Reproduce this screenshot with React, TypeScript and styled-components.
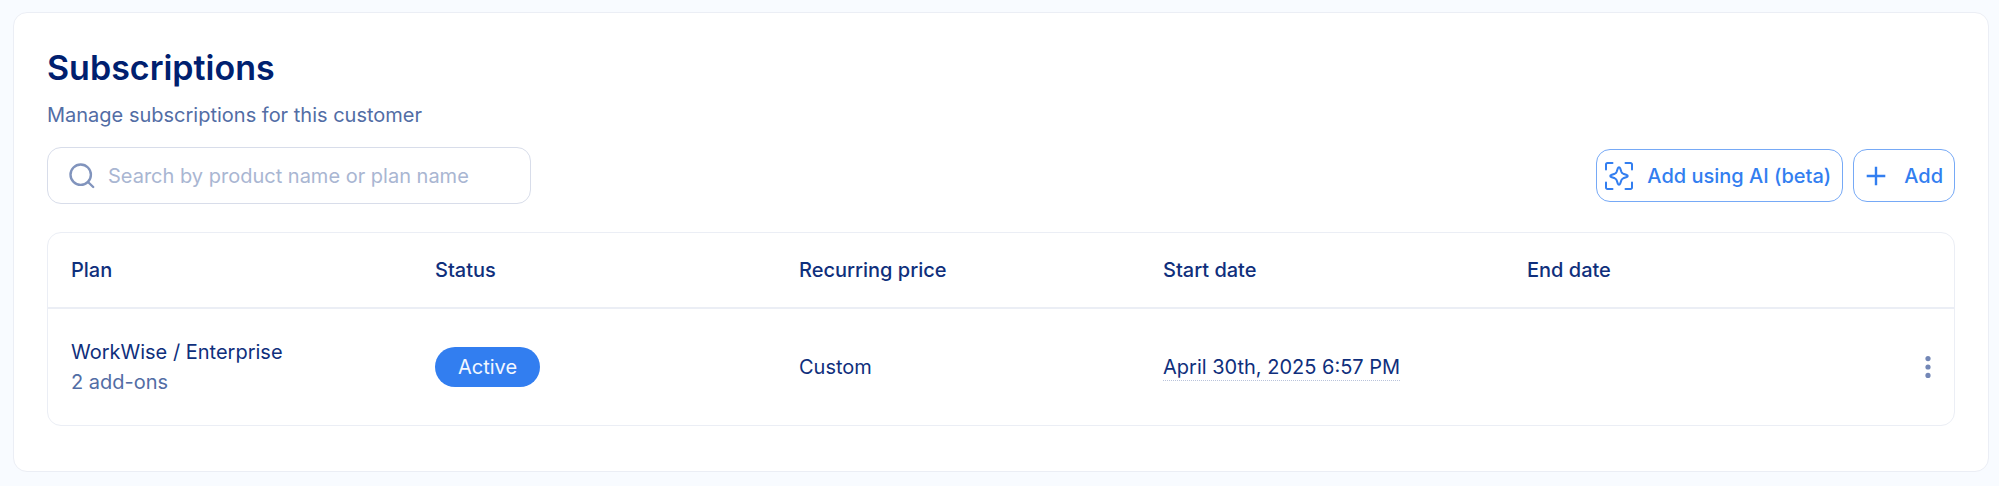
import React, { useState } from "react";
import styled, { createGlobalStyle } from "styled-components";

const color = {
  page: "#f8fbff",
  ink: "#0f2f7c",
  title: "#00206f",
  muted: "#526da5",
  icon: "#8194bd",
  placeholder: "#a9b6d2",
  border: "#d8ddea",
  faint: "#ebeef5",
  primary: "#327ef0",
};

const GlobalStyle = createGlobalStyle`
  *, *::before, *::after { box-sizing: border-box; }
  body {
    margin: 0;
    background: ${color.page};
    color: ${color.ink};
    font-family: Inter, "Liberation Sans", sans-serif;
    font-size: 20px;
    line-height: 30px;
  }
`;

const Page = styled.main`
  padding: 12px 10px 12px 13px;
`;

const Card = styled.section`
  display: flex;
  flex-direction: column;
  padding: 33px 33px 45px;
  background: #fff;
  border: 1px solid ${color.faint};
  border-radius: 14px;
`;

const Title = styled.h1`
  margin: 0;
  color: ${color.title};
  font-size: 34px;
  font-weight: 600;
  line-height: 44px;
`;

const Subtitle = styled.p`
  margin: 10px 0 17px;
  color: ${color.muted};
`;

const Toolbar = styled.div`
  display: flex;
  align-items: center;
  justify-content: space-between;
  gap: 24px;
`;

const SearchField = styled.label`
  display: flex;
  align-items: center;
  gap: 12px;
  flex: 0 1 484px;
  min-width: 0;
  height: 57px;
  padding: 0 20px;
  border: 1px solid ${color.border};
  border-radius: 14px;
  color: ${color.icon};
`;

const SearchInput = styled.input`
  flex: 1;
  min-width: 0;
  padding: 0;
  border: 0;
  outline: 0;
  background: transparent;
  color: ${color.ink};
  font: inherit;

  &::placeholder {
    color: ${color.placeholder};
    opacity: 1;
  }
`;

const Actions = styled.div`
  display: flex;
  gap: 10px;
`;

const ActionButton = styled.button`
  display: flex;
  align-items: center;
  gap: 13px;
  height: 53px;
  padding: 0 11px 0 7px;
  border: 1px solid #76a9f6;
  border-radius: 14px;
  background: #fff;
  color: ${color.primary};
  font: inherit;
  font-weight: 500;
  white-space: nowrap;
  cursor: pointer;
`;

const TableFrame = styled.div`
  margin-top: 28px;
  border: 1px solid ${color.faint};
  border-radius: 14px;
  overflow: hidden;
`;

const Table = styled.table`
  width: 100%;
  border-collapse: collapse;
  table-layout: fixed;
`;

const HeadCell = styled.th<{ $menu?: boolean }>`
  width: ${(p) => (p.$menu ? "86px" : "auto")};
  height: 75px;
  padding: 0 0 0 23px;
  border-bottom: 2px solid ${color.faint};
  font-weight: 500;
  text-align: left;
`;

const Cell = styled.td<{ $menu?: boolean }>`
  height: 117px;
  padding: ${(p) => (p.$menu ? "0 14px 0 0" : "0 0 0 23px")};
`;

const AddOns = styled.div`
  color: ${color.muted};
`;

const Badge = styled.span`
  display: block;
  width: fit-content;
  padding: 5px 23px;
  border-radius: 20px;
  background: ${color.primary};
  color: #f2f7ff;
`;

const DateText = styled.time`
  display: inline-block;
  line-height: 26px;
  border-bottom: 1px dotted #b9c3da;
`;

const MenuButton = styled.button`
  display: flex;
  margin-left: auto;
  padding: 0;
  border: 0;
  background: transparent;
  color: #7387b6;
  cursor: pointer;
`;

const SearchIcon = () => (
  <svg width="28" height="28" viewBox="0 0 28 28" fill="none" stroke="currentColor" strokeWidth="2.4" strokeLinecap="round" aria-hidden="true">
    <circle cx="12.7" cy="12.7" r="10.2" />
    <path d="M20 20l5.200 5" />
  </svg>
);

const AiIcon = () => (
  <svg width="30" height="30" viewBox="0 0 30 30" fill="none" stroke="currentColor" strokeWidth="2" strokeLinecap="round" strokeLinejoin="round" aria-hidden="true">
    <path d="M2 8.500V3.500a1.500 1.500 0 0 1 1.500-1.500h5M21.500 2h5a1.500 1.500 0 0 1 1.500 1.500v5M28 21.500v5a1.500 1.500 0 0 1-1.500 1.500h-5M8.500 28h-5a1.500 1.500 0 0 1-1.500-1.500v-5" />
    <path d="M15 6.300c.6 0 .9.300 1.100.9l1.300 3.600c.5 1.200.7 1.400 1.800 1.900l3.600 1.300c.6.200.9.500.9 1s-.300.800-.9 1l-3.600 1.300c-1.100.5-1.300.7-1.800 1.900l-1.300 3.600c-.2.600-.5.900-1.100.9s-.9-.300-1.100-.9l-1.300-3.600c-.5-1.200-.7-1.400-1.800-1.900L7.200 16c-.6-.2-.9-.5-.9-1s.300-.8.900-1l3.600-1.300c1.100-.5 1.300-.7 1.800-1.900l1.300-3.600c.2-.6.5-.9 1.100-.9z" />
  </svg>
);

const PlusIcon = () => (
  <svg width="30" height="30" viewBox="0 0 30 30" fill="none" stroke="currentColor" strokeWidth="2.400" aria-hidden="true">
    <path d="M15 5.700v18.600M5.700 15h18.600" />
  </svg>
);

const DotsIcon = () => (
  <svg width="24" height="24" viewBox="0 0 24 24" fill="currentColor" aria-hidden="true">
    <circle cx="12" cy="3.600" r="2.600" />
    <circle cx="12" cy="12" r="2.600" />
    <circle cx="12" cy="20.400" r="2.600" />
  </svg>
);

const columns = ["Plan", "Status", "Recurring price", "Start date", "End date"];

export default function App() {
  const [query, setQuery] = useState("");

  return (
    <>
      <GlobalStyle />
      <Page>
        <Card>
          <Title>Subscriptions</Title>
          <Subtitle>Manage subscriptions for this customer</Subtitle>
          <Toolbar>
            <SearchField htmlFor="subscription-search">
              <SearchIcon />
              <SearchInput
                id="subscription-search"
                type="text"
                placeholder="Search by product name or plan name"
                value={query}
                onChange={(e) => setQuery(e.target.value)}
              />
            </SearchField>
            <Actions>
              <ActionButton type="button">
                <AiIcon />
                Add using AI (beta)
              </ActionButton>
              <ActionButton type="button">
                <PlusIcon />
                Add
              </ActionButton>
            </Actions>
          </Toolbar>
          <TableFrame>
            <Table>
              <thead>
                <tr>
                  {columns.map((name) => (
                    <HeadCell key={name} scope="col">{name}</HeadCell>
                  ))}
                  <HeadCell $menu aria-label="Actions" />
                </tr>
              </thead>
              <tbody>
                <tr>
                  <Cell>
                    <div>WorkWise / Enterprise</div>
                    <AddOns>2 add-ons</AddOns>
                  </Cell>
                  <Cell><Badge>Active</Badge></Cell>
                  <Cell>Custom</Cell>
                  <Cell><DateText dateTime="2025-04-30T18:57">April 30th, 2025 6:57 PM</DateText></Cell>
                  <Cell />
                  <Cell $menu>
                    <MenuButton type="button" aria-label="Subscription actions"><DotsIcon /></MenuButton>
                  </Cell>
                </tr>
              </tbody>
            </Table>
          </TableFrame>
        </Card>
      </Page>
    </>
  );
}
